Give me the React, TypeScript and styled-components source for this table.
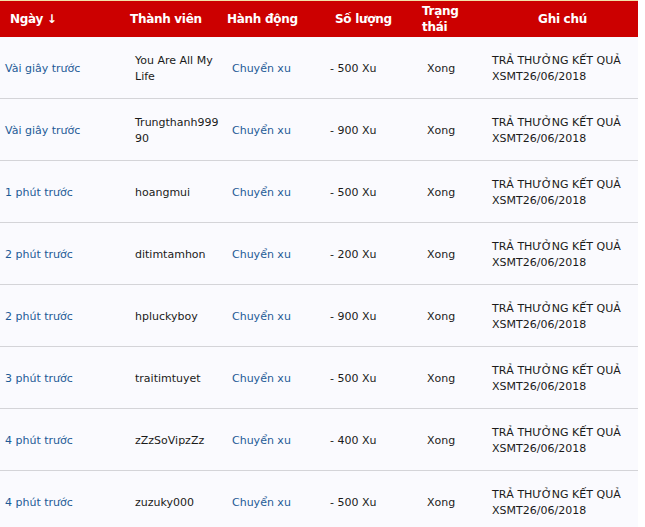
import React from "react";
import styled, { createGlobalStyle } from "styled-components";

const Global = createGlobalStyle`
  html, body { margin: 0; padding: 0; background: #ffffff; }
  body { font-family: "DejaVu Sans", Verdana, sans-serif; }
`;

const COLS = "130px 97px 98px 97px 65px 151px";

const Table = styled.div`
  width: 638px;
  background: #fafafe;
  border-top: 1px solid #f3e2a8;
`;

const HeaderRow = styled.div`
  display: grid;
  grid-template-columns: ${COLS};
  height: 36px;
  background: #cc0000;
`;

const HeadCell = styled.div<{ $indent?: number; $center?: boolean }>`
  display: flex;
  align-items: center;
  justify-content: ${(p) => (p.$center ? "center" : "flex-start")};
  padding-left: ${(p) => (p.$center ? 0 : p.$indent ?? 0)}px;
  color: #ffffff;
  font-weight: bold;
  font-size: 12px;
  line-height: 16px;
  letter-spacing: -0.3px;
`;

const Row = styled.div`
  display: grid;
  grid-template-columns: ${COLS};
  height: 61px;
  border-bottom: 1px solid #d4d4d8;
`;

const Cell = styled.div<{ $link?: boolean; $wrapAny?: boolean }>`
  display: flex;
  align-items: center;
  padding: 3px ${(p) => (p.$wrapAny ? 8 : 4)}px 0 5px;
  font-size: 11px;
  line-height: 16px;
  letter-spacing: 0px;
  color: ${(p) => (p.$link ? "#1e5a96" : "#1a1a1a")};
  overflow-wrap: ${(p) => (p.$wrapAny ? "anywhere" : "normal")};
  min-width: 0;
`;

type Item = { time: string; user: string; amount: string };

const data: Item[] = [
  { time: "Vài giây trước", user: "You Are All My Life", amount: "- 500 Xu" },
  { time: "Vài giây trước", user: "Trungthanh99990", amount: "- 900 Xu" },
  { time: "1 phút trước", user: "hoangmui", amount: "- 500 Xu" },
  { time: "2 phút trước", user: "ditimtamhon", amount: "- 200 Xu" },
  { time: "2 phút trước", user: "hpluckyboy", amount: "- 900 Xu" },
  { time: "3 phút trước", user: "traitimtuyet", amount: "- 500 Xu" },
  { time: "4 phút trước", user: "zZzSoVipzZz", amount: "- 400 Xu" },
  { time: "4 phút trước", user: "zuzuky000", amount: "- 500 Xu" },
];

export default function App() {
  return (
    <>
      <Global />
      <Table>
        <HeaderRow>
          <HeadCell $indent={10}>Ngày ↓</HeadCell>
          <HeadCell $indent={0}>Thành viên</HeadCell>
          <HeadCell $indent={0}>Hành động</HeadCell>
          <HeadCell $indent={10}>Số lượng</HeadCell>
          <HeadCell $indent={0}>
            Trạng
            <br />
            thái
          </HeadCell>
          <HeadCell $center>Ghi chú</HeadCell>
        </HeaderRow>
        {data.map((d, i) => (
          <Row key={i}>
            <Cell $link>{d.time}</Cell>
            <Cell $wrapAny>{d.user}</Cell>
            <Cell $link>Chuyển xu</Cell>
            <Cell>{d.amount}</Cell>
            <Cell>Xong</Cell>
            <Cell>TRẢ THƯỞNG KẾT QUẢ XSMT26/06/2018</Cell>
          </Row>
        ))}
      </Table>
    </>
  );
}
